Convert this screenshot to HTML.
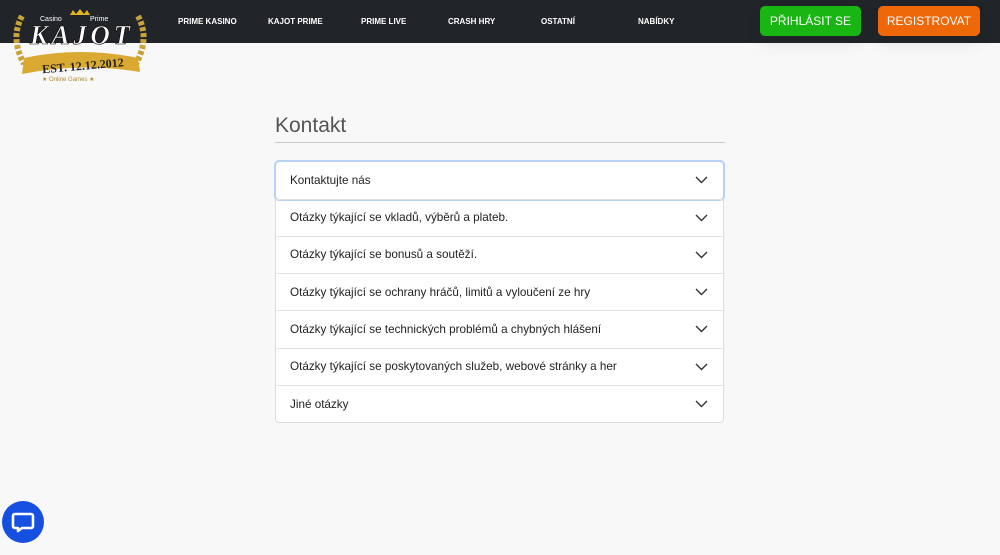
<!DOCTYPE html>
<html><head><meta charset="utf-8"><style>
*{box-sizing:border-box;margin:0;padding:0}
body{width:1000px;height:555px;background:#f8f8f8;font-family:"Liberation Sans",sans-serif;position:relative;overflow:hidden}
.hdr{position:absolute;left:0;top:0;width:1000px;height:43px;background:#212529}
.nav{position:absolute;top:17px;font-size:8px;font-weight:bold;color:#fff;white-space:nowrap}
.btn{position:absolute;top:6px;height:30px;border-radius:5px;color:#fff;font-size:12px;display:flex;align-items:center;justify-content:center;box-shadow:0 8px 16px rgba(0,0,0,.08)}
h1{position:absolute;left:275px;top:114px;font-size:21px;font-weight:normal;color:#555}
.hr{position:absolute;left:275px;top:142px;width:450px;height:1px;background:#c8c8c8}
.acc{position:absolute;left:275px;top:161px;width:449px;background:#fff;border:1px solid #ddd;border-radius:4px}
.row{height:37.3px;border-top:1px solid #e3e3e3;display:flex;align-items:center;padding-left:14px;font-size:11.7px;color:#222;position:relative}
.row:first-child{border-top:none;box-shadow:0 0 0 2px #b8d2f5;border-radius:3px;height:36.5px}
.row svg{position:absolute;right:15px;top:14px}
</style></head><body>
<div class="hdr"></div>
<svg style="position:absolute;left:10px;top:8px" width="140" height="76" viewBox="0 0 140 76">
<path d="M12 8 Q0 30 14 56" stroke="#c9a23a" stroke-width="6" fill="none" stroke-dasharray="4 2"/>
<path d="M128 8 Q140 30 126 56" stroke="#c9a23a" stroke-width="6" fill="none" stroke-dasharray="4 2"/>
<path d="M14 50 Q70 38 128 50 L130 64 Q70 54 12 66Z" fill="#d9a932"/>
<text x="32" y="62" font-family="Liberation Serif" font-weight="bold" font-size="12" fill="#222" transform="rotate(-5 70 58)">EST. 12.12.2012</text>
<text x="32" y="73" font-size="6" fill="#b08a30">★ Online Games ★</text>
<text x="30" y="13" font-size="7" fill="#fff">Casino</text><text x="80" y="13" font-size="7" fill="#fff">Prime</text>
<path d="M60 7 L63 2 L66 6 L70 1 L74 6 L77 2 L80 7Z" fill="#e3b323"/>
<text x="20" y="36" font-family="Liberation Serif" font-style="italic" font-weight="bold" font-size="27" fill="#fff" stroke="#000" stroke-width=".6" textLength="100">KAJOT</text>
</svg>
<div class="nav" style="left:178px">PRIME KASINO</div>
<div class="nav" style="left:268px">KAJOT PRIME</div>
<div class="nav" style="left:361px">PRIME LIVE</div>
<div class="nav" style="left:448px">CRASH HRY</div>
<div class="nav" style="left:541px">OSTATNÍ</div>
<div class="nav" style="left:638px">NABÍDKY</div>
<div class="btn" style="left:760px;width:101px;background:#19b613">PŘIHLÁSIT SE</div>
<div class="btn" style="left:878px;width:102px;background:#ee6708">REGISTROVAT</div>
<h1>Kontakt</h1><div class="hr"></div>
<div class="acc">
<div class="row">Kontaktujte nás<svg width="13" height="8"><path d="M1 1L6.5 6.5L12 1" stroke="#333" stroke-width="1.4" fill="none"/></svg></div>
<div class="row">Otázky týkající se vkladů, výběrů a plateb.<svg width="13" height="8"><path d="M1 1L6.5 6.5L12 1" stroke="#333" stroke-width="1.4" fill="none"/></svg></div>
<div class="row">Otázky týkající se bonusů a soutěží.<svg width="13" height="8"><path d="M1 1L6.5 6.5L12 1" stroke="#333" stroke-width="1.4" fill="none"/></svg></div>
<div class="row">Otázky týkající se ochrany hráčů, limitů a vyloučení ze hry<svg width="13" height="8"><path d="M1 1L6.5 6.5L12 1" stroke="#333" stroke-width="1.4" fill="none"/></svg></div>
<div class="row">Otázky týkající se technických problémů a chybných hlášení<svg width="13" height="8"><path d="M1 1L6.5 6.5L12 1" stroke="#333" stroke-width="1.4" fill="none"/></svg></div>
<div class="row">Otázky týkající se poskytovaných služeb, webové stránky a her<svg width="13" height="8"><path d="M1 1L6.5 6.5L12 1" stroke="#333" stroke-width="1.4" fill="none"/></svg></div>
<div class="row">Jiné otázky<svg width="13" height="8"><path d="M1 1L6.5 6.5L12 1" stroke="#333" stroke-width="1.4" fill="none"/></svg></div>
</div>
<svg style="position:absolute;left:1px;top:500px" width="44" height="44" viewBox="0 0 44 44">
<circle cx="22" cy="22" r="21" fill="#1650e0"/>
<path d="M14 14h16a2 2 0 0 1 2 2v10a2 2 0 0 1-2 2H21l-4 3v-3h-3a2 2 0 0 1-2-2V16a2 2 0 0 1 2-2z" fill="none" stroke="#fff" stroke-width="2.6" stroke-linejoin="round"/>
</svg>
</body></html>
